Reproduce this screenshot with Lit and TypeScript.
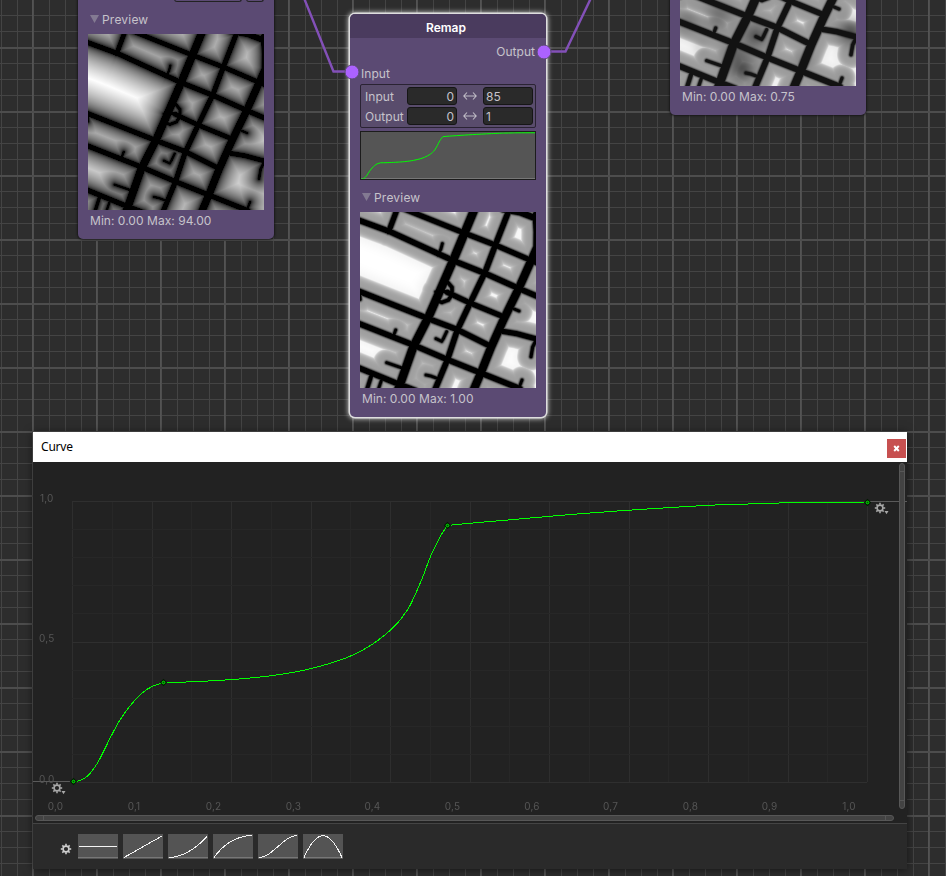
import { LitElement, html, svg, css } from "lit";
import { customElement, property } from "lit/decorators.js";

type Pt = [number, number];

/* Curve samples in plot pixels; the plot spans x 73.5-867.5 and y 781.5-502.5. */
const SAMPLES: Pt[] = [
  [73.5, 781.5], [80, 780.6], [86.7, 776.7], [93.3, 769.3], [100, 758.5], [111.7, 735], [120, 720], [130, 706],
  [141.7, 693.3], [151.7, 686.7], [163.5, 682.5], [192.3, 681.8], [231, 679.6], [253.3, 677.7], [271.7, 675.7],
  [296.7, 671.7], [313.3, 668], [330, 663.3], [346.7, 657.7], [363.3, 649.7], [376.7, 641.3], [391.7, 629],
  [400, 620], [410, 605.5], [421.7, 579.5], [430, 557.7], [436.7, 543.3], [441.7, 534], [447.5, 525.5],
  [476.7, 522.6], [510, 519.8], [545, 516.7], [582, 513.6], [623, 510.6], [669, 507.6], [706.7, 505.4],
  [730, 504.5], [763, 503.6], [790, 502.8], [867.5, 502.5],
];
const KEYS: Pt[] = [[73.5, 781.5], [163.5, 682.5], [447.5, 525.5], [867.5, 502.5]];

const smooth = (p: Pt[]): string => {
  let d = `M${p[0][0]} ${p[0][1]}`;
  for (let i = 0; i < p.length - 1; i++) {
    const a = p[Math.max(0, i - 1)], b = p[i], c = p[i + 1], e = p[Math.min(p.length - 1, i + 2)];
    const atKey = (q: Pt) => KEYS.some((k) => k[0] === q[0]);
    const c1 = atKey(b) ? [b[0] + (c[0] - b[0]) / 3, b[1] + (c[1] - b[1]) / 3] : [b[0] + (c[0] - a[0]) / 6, b[1] + (c[1] - a[1]) / 6];
    const c2 = atKey(c) ? [c[0] - (c[0] - b[0]) / 3, c[1] - (c[1] - b[1]) / 3] : [c[0] - (e[0] - b[0]) / 6, c[1] - (e[1] - b[1]) / 6];
    d += `C${c1[0]} ${c1[1]} ${c2[0]} ${c2[1]} ${c[0]} ${c[1]}`;
  }
  return d;
};
const CURVE = smooth(SAMPLES);

const evaluate = (t: number): number => {
  const x = 73.5 + Math.min(1, Math.max(0, t)) * 794;
  for (let i = 1; i < SAMPLES.length; i++) {
    const [x0, y0] = SAMPLES[i - 1], [x1, y1] = SAMPLES[i];
    if (x <= x1) return (781.5 - (y0 + ((y1 - y0) * (x - x0)) / (x1 - x0))) / 279;
  }
  return 1;
};

/* Roads in thirds of a pixel: stroke width followed by the polyline. */
const ROADS: { w: number; p: Pt[] }[] = [
  { w: 14, p: [[-20, 18], [0, 26], [90, 59], [280, 146], [375, 184], [480, 231], [548, 260]] },
  { w: 13, p: [[130, -10], [155, 0], [310, 62], [408, 100], [515, 146], [548, 160]] },
  { w: 16, p: [[430, -8], [480, 1], [540, 24]] },
  { w: 14, p: [[526, 8], [529, 60], [528, 120]] },
  { w: 13, p: [[262, 241], [330, 273], [430, 314]] },
  { w: 14, p: [[-20, 231], [0, 239], [205, 320], [290, 352], [390, 402]] },
  { w: 14, p: [[-20, 328], [0, 336], [160, 399], [265, 444], [365, 484], [480, 530]] },
  { w: 14, p: [[-20, 461], [0, 469], [110, 514], [165, 535]] },
  { w: 13, p: [[428, 358], [470, 365], [548, 386]] },
  { w: 22, p: [[344, -10], [280, 144], [205, 316], [160, 404], [112, 540]] },
  { w: 14, p: [[448, -8], [408, 94], [375, 181], [330, 274], [292, 354], [262, 444], [222, 540]] },
  { w: 21, p: [[534, 100], [475, 232], [430, 324], [394, 404], [362, 484], [338, 540]] },
  { w: 13, p: [[112, -10], [86, 59]] },
  { w: 6, p: [[247, 95], [243, 110], [234, 130]] },
  { w: 8, p: [[248, 209], [264, 212], [276, 226], [276, 248], [265, 264], [246, 271], [228, 266]] },
  { w: 8, p: [[228, 240], [252, 238], [278, 248]] },
  { w: 6, p: [[260, 359], [250, 380], [245, 388], [228, 380]] },
  { w: 6, p: [[107, 354], [98, 378]] },
  { w: 6, p: [[80, 452], [132, 470]] },
  { w: 6, p: [[198, 489], [212, 492], [234, 500]] },
  { w: 6, p: [[486, 504], [476, 530]] },
  { w: 7, p: [[528, 385], [518, 405], [513, 434]] },
  { w: 6, p: [[460, 290], [477, 297]] },
  { w: 9, p: [[36, 485], [20, 535]] },
  { w: 6, p: [[66, 500], [54, 535]] },
  { w: 7, p: [[-2, 235], [0, 262]] },
];

const segDistance = (x: number, y: number, a: Pt, b: Pt): number => {
  const dx = b[0] - a[0], dy = b[1] - a[1];
  const t = Math.min(1, Math.max(0, ((x - a[0]) * dx + (y - a[1]) * dy) / (dx * dx + dy * dy)));
  return Math.hypot(x - a[0] - t * dx, y - a[1] - t * dy);
};

let field: Float32Array | undefined;
const distanceField = (): Float32Array => {
  if (field) return field;
  field = new Float32Array(176 * 176);
  for (let j = 0; j < 176; j++)
    for (let i = 0; i < 176; i++) {
      const x = i * 3 + 1.5, y = j * 3 + 1.5;
      let d = 1e9;
      for (const r of ROADS)
        for (let k = 1; k < r.p.length; k++) d = Math.min(d, segDistance(x, y, r.p[k - 1], r.p[k]) - r.w / 2);
      field[j * 176 + i] = Math.max(0, d);
    }
  return field;
};

/* Dark patches for the multiplied map: x, y, radius, strength. */
const PATCHES = [
  [115, 315, 45, 0.5], [185, 475, 42, 0.75], [225, 375, 42, 0.7], [510, 365, 40, 0.75], [370, 450, 30, 0.3],
  [20, 330, 40, 0.4], [165, 430, 40, 0.5], [60, 410, 25, 0.2], [500, 510, 30, 0.1],
];

@customElement("field-map")
class FieldMap extends LitElement {
  @property() kind = "distance";
  static styles = css`
    :host { display: block; width: 176px; height: 176px; }
    canvas { display: block; }
  `;
  firstUpdated() {
    const ctx = this.renderRoot.querySelector("canvas")!.getContext("2d")!;
    const img = ctx.createImageData(176, 176);
    const f = distanceField();
    for (let n = 0; n < f.length; n++) {
      const d = f[n];
      let v = this.kind === "distance" ? d / 94 : evaluate(d / 85);
      if (this.kind === "masked") {
        const x = (n % 176) * 3, y = Math.floor(n / 176) * 3;
        for (const [px, py, r, s] of PATCHES) v *= 1 - s * Math.exp(-((x - px) ** 2 + (y - py) ** 2) / (r * r));
        v = Math.min(1, v * 0.94 + 0.003);
      }
      const g = 255 * Math.pow(Math.min(1, v), 1 / 2.2);
      img.data.set([g, g, g, 255], n * 4);
    }
    ctx.putImageData(img, 0, 0);
  }
  render() {
    return html`<canvas width="176" height="176"></canvas>`;
  }
}

const cogwheel = (x: number, y: number, color: string) => svg`
  <g fill="none" stroke=${color}>
    <circle cx=${x} cy=${y} r="2.9" stroke-width="1.6" />
    ${[0, 45, 90, 135, 180, 225, 270, 315].map((a) => svg`
      <path d=${`M${x - 0} ${y - 3.2}v-2`} stroke-width="1.6" transform=${`rotate(${a} ${x} ${y})`} />`)}
  </g>`;

const arrows = html`<svg class="arrows" width="14" height="10" viewBox="0 0 14 10">
  <path d="M1 5H13M4 1.5L0.8 5L4 8.5M10 1.5L13.2 5L10 8.5" fill="none" stroke="#c0bcc6" stroke-width="1.1" />
</svg>`;

const PRESETS = [
  "M1 12.5H39",
  "M1 23.5L39 2",
  "M1 23.5C13 23.5 28 15 39 2.5",
  "M1 23.5C12 8 24 2 39 1.5",
  "M1 23.5C14 23.5 26 1.5 39 1.5",
  "M1 23.5C14 -5.5 26 -5.5 39 23.5",
];

@customElement("curve-window")
class CurveWindow extends LitElement {
  static styles = css`
    :host { display: flex; flex-direction: column; width: 874px; height: 437px; background: #222;
      box-shadow: 0 1px 9px rgba(0, 0, 0, 0.55); font: 11px Inter, sans-serif; letter-spacing: 0; }
    .title { height: 30px; background: #fff; color: #000; display: flex; align-items: center; justify-content: space-between;
      padding: 0 1px 0 8px; box-sizing: border-box; font: 12px "Noto Sans", "Open Sans", sans-serif; }
    .name { letter-spacing: -0.2px; padding-bottom: 1px; }
    .close { width: 19px; height: 19px; margin-top: 3px; background: #c75050; color: #fff; display: flex; align-items: center;
      justify-content: center; }
    .plot { display: block; width: 874px; height: 361px; }
    .lbl { fill: #565656; font: 10px Inter, sans-serif; letter-spacing: 0.2px; }
    .presets { flex: 1; background: #2a2a2a; border-top: 1px solid #444; display: flex; align-items: flex-start; gap: 5px;
      padding: 10px 0 0 26px; box-sizing: border-box; }
    .preset { background: #545454; }
    .cog { margin-top: 8px; }
  `;
  render() {
    const xs = Array.from({ length: 21 }, (_, i) => i);
    const ys = Array.from({ length: 11 }, (_, i) => i);
    const labels = [55.5, 134, 213.5, 293.5, 372.5, 452.5, 532, 610.5, 690.5, 769.5, 849];
    return html`
      <div class="title"><span class="name">Curve</span><span class="close">
        <svg width="7" height="7" viewBox="0 0 7 7"><path d="M1.2 1L5.8 6M5.8 1L1.2 6" stroke="#fff" stroke-width="1.9" /></svg></span></div>
      <svg class="plot" viewBox="33 462 874 361">
        ${xs.map((i) => svg`<path d=${`M${Math.round(72 + i * 39.75) + 0.5} 501V782`} stroke=${i % 2 ? "#272727" : "#2e2e2e"} />`)}
        ${ys.map((i) => svg`<path d=${`M72 ${Math.round(501 + i * 28.1) + 0.5}H867`} stroke=${i % 5 ? "#272727" : "#2f2f2f"} />`)}
        <path d="M33 781.5H73M868 501.5H907" stroke="#5a5a5a" />
        <g class="lbl">
          <text x="40" y="502">1,0</text><text x="39" y="642">0,5</text><text x="39" y="783">0,0</text>
          ${labels.map((x, i) => svg`<text x=${x} y="810" text-anchor="middle">${i === 10 ? "1,0" : `0,${i}`}</text>`)}
        </g>
        <path d=${CURVE} fill="none" stroke="#0f0" shape-rendering="crispEdges" />
        ${KEYS.map(([x, y]) => svg`<path d=${`M${x - 2.8} ${y}l2.8 -2.8 2.8 2.8 -2.8 2.8z`} fill="#0a0" stroke="#031c03" stroke-width="1.3" />
          <circle cx=${x} cy=${y} r="1.3" fill="#064006" stroke="#0d0" stroke-width="1" />`)}
        <g fill="#434343" stroke="#575757">
          <rect x="35.5" y="815.5" width="858" height="5" rx="2.5" /><rect x="899.5" y="463.5" width="5" height="345" rx="2.5" />
          <path d="M43.5 816V820M885.5 816V820M900 471.5H904M900 800.5H904" />
        </g>
        ${[[57, 788], [880, 508]].map(([x, y]) => svg`${cogwheel(x, y, "#a8a8a8")}
          <path d=${`M${x + 4.5} ${y + 3}h4l-2 3.2z`} fill="#a8a8a8" />`)}
      </svg>
      <div class="presets">
        <svg class="cog" width="14" height="14">${cogwheel(7, 7, "#cfcfcf")}</svg>
        ${PRESETS.map((d) => html`<svg class="preset" width="40" height="25" viewBox="0 0 40 25">
          <path d="M0 23.5H40" stroke="#777" />
          <path d=${d} fill="none" stroke="#f4f4f4" shape-rendering="crispEdges" /></svg>`)}
      </div>`;
  }
}

@customElement("app-root")
class AppRoot extends LitElement {
  static styles = css`
    :host { display: block; position: relative; width: 946px; height: 876px; overflow: hidden; color: #c6c3cb;
      font: 12px Inter, sans-serif; letter-spacing: 0.04px; background: #2d2d2d; }
    .grid, .links { position: absolute; left: 0; top: 0; width: 946px; height: 876px; }
    .win { position: absolute; left: 33px; top: 432px; }
    .node { position: absolute; width: 196px; box-sizing: border-box; background: #5b4a73; border-radius: 5px;
      box-shadow: 0 0 2px 1px rgba(20, 20, 20, 0.8); padding: 0 10px; overflow: hidden; }
    .left { left: 78px; top: -10px; height: 249px; }
    .right { left: 670px; top: -130px; height: 245px; padding-top: 40px; }
    .mid { left: 350px; top: 14px; height: 403px; box-shadow: 0 0 0 1.5px #dedede, 0 0 5px 2px rgba(240, 240, 240, 0.75); }
    .stubs { display: flex; gap: 4px; height: 12px; margin-left: 86px; }
    .stub { background: #5b4a73; border: 1px solid #222; border-top: 0; border-radius: 0 0 3px 3px; box-sizing: border-box; height: 12px; width: 69px; }
    .stub.small { width: 18px; }
    .fold { display: flex; align-items: center; gap: 3px; height: 16px; padding-left: 2px; letter-spacing: 0.2px; }
    .left .fold { margin: 9px 0 7px; }
    .mid .fold { margin: 9px 0 7px; }
    .range { height: 22px; line-height: 22px; padding-left: 2px; }
    .head { margin: 0 -10px; height: 24px; background: #4a3b5e; display: flex; align-items: center; justify-content: center;
      color: #fff; font-weight: 600; padding-top: 3px; padding-right: 4px; box-sizing: border-box; }
    .out { height: 26px; line-height: 28px; text-align: right; padding-right: 1px; }
    .in { height: 20px; line-height: 20px; padding-left: 1px; }
    .ranges { display: grid; grid-template-columns: 42px 50px 26px 50px; row-gap: 2px; border: 1px solid #2a2333; border-radius: 2px;
      padding: 2px 0 2px 4px; box-sizing: border-box; height: 44px; width: 176px; align-items: center; background: #594c6c; }
    .box { background: #2a2a2a; border: 1px solid #161616; border-radius: 3px; height: 18px; line-height: 17px; box-sizing: border-box; padding: 0 2px; }
    .num { text-align: right; }
    .arrows { margin: 0 auto; }
    .mini { display: block; margin-top: 3px; background: #555; }
  `;
  private fold() {
    return html`<div class="fold"><svg width="9" height="8"><path d="M0 0H9L4.5 8Z" fill="#837a92" /></svg>Preview</div>`;
  }
  render() {
    const lines = (s: number, first: number, end: number) => {
      const r: number[] = [];
      for (let v = first; v < end; v += s) r.push(v);
      return r;
    };
    return html`
      <svg class="grid" viewBox="0 0 946 876">
        ${lines(16, 1.5, 946).map((x) => svg`<path d=${`M${x} 0V876`} stroke="#444" />`)}
        ${lines(16, 15.5, 876).map((y) => svg`<path d=${`M0 ${y}H946`} stroke="#444" />`)}
        ${lines(64, 32.8, 946).map((x) => svg`<path d=${`M${x} 0V876`} stroke="#585858" stroke-width="1.4" />`)}
        ${lines(64, 48, 876).map((y) => svg`<path d=${`M0 ${y}H946`} stroke="#4d4d4d" stroke-width="2" />`)}
      </svg>
      <div class="node left">
        <div class="stubs"><span class="stub"></span><span class="stub small"></span></div>
        ${this.fold()}
        <field-map kind="distance"></field-map>
        <div class="range">Min: 0.00 Max: 94.00</div>
      </div>
      <div class="node right">
        <field-map kind="masked"></field-map>
        <div class="range">Min: 0.00 Max: 0.75</div>
      </div>
      <div class="node mid">
        <div class="head">Remap</div>
        <div class="out">Output</div>
        <div class="in">Input</div>
        <div class="ranges">
          <span>Input</span><span class="box num">0</span>${arrows}<span class="box">85</span>
          <span>Output</span><span class="box num">0</span>${arrows}<span class="box">1</span>
        </div>
        <svg class="mini" width="176" height="49" viewBox="0 0 176 49">
          <path d="M1 47.5H175" stroke="#777" />
          <path d=${CURVE} transform="translate(-15.1 -82) scale(0.2191 0.1667)" fill="none" stroke="#0f0"
            vector-effect="non-scaling-stroke" shape-rendering="crispEdges" />
          <rect x=".5" y=".5" width="175" height="48" fill="none" stroke="#1c1c1c" />
        </svg>
        ${this.fold()}
        <field-map kind="remap"></field-map>
        <div class="range">Min: 0.00 Max: 1.00</div>
      </div>
      <svg class="links" viewBox="0 0 946 876">
        <path d="M304 -2L333.5 71.5H346M550 51.5H565.5L591 -2" fill="none" stroke="#8350b8" stroke-width="2.4" />
        <g fill="#ac62ff" stroke="#5b4a73" stroke-width="1"><circle cx="352" cy="72" r="7" /><circle cx="544" cy="52" r="7" /></g>
      </svg>
      <curve-window class="win"></curve-window>`;
  }
}
